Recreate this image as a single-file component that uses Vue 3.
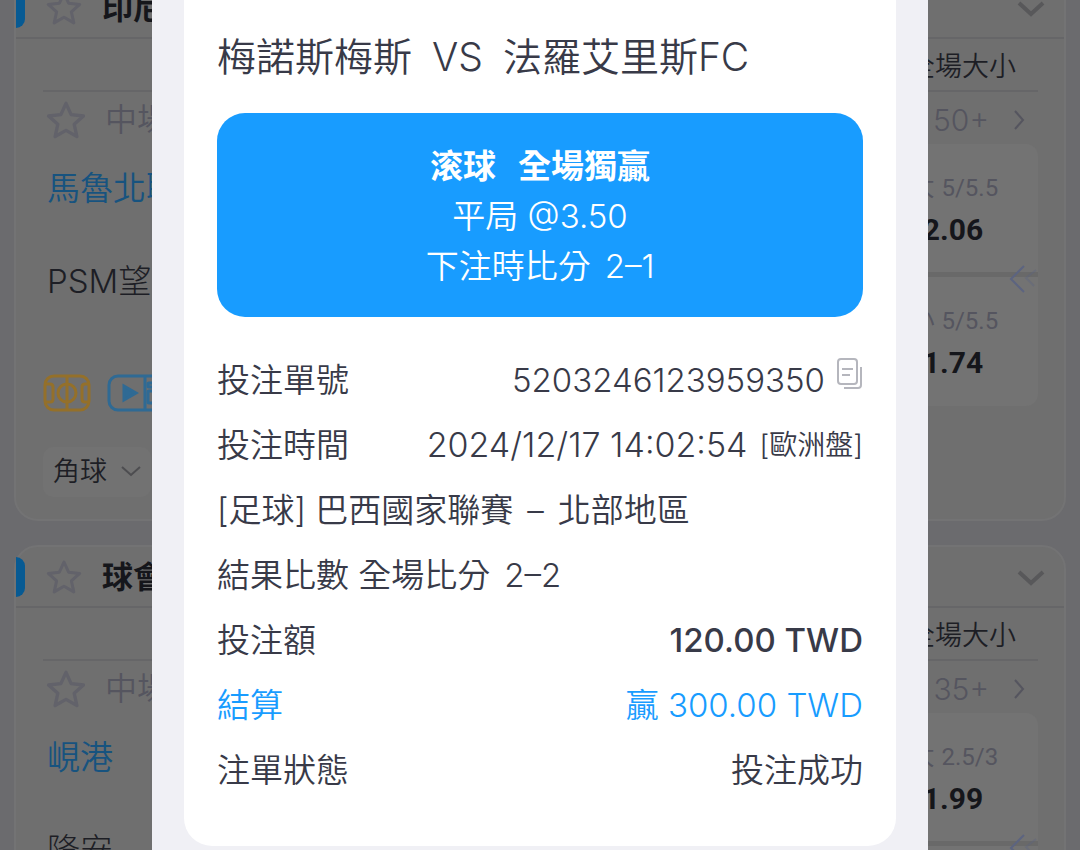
<script setup>
const matches = [
  { league: '印尼', count: '50+', home: '馬魯北聯', away: 'PSM望', odds: [['大', '5/5.5', '2.06'], ['小', '5/5.5', '1.74']] },
  { league: '球會', count: '35+', home: '峴港', away: '隆安', odds: [['大', '2.5/3', '1.99'], ['小', '2.5/3', '1.81']] },
]
</script>

<template>
  <div class="page">
    <main class="list">
      <section v-for="m in matches" :key="m.league" class="match">
        <header class="league">
          <span class="tab"></span>
          <svg class="star" width="38" height="36" viewBox="0 0 38 36"><path d="M19 3l4.6 10.2 11.1 1.2-8.3 7.5 2.4 11-9.8-5.6-9.8 5.6 2.4-11-8.3-7.5 11.1-1.200z" /></svg>
          <h2>{{ m.league }}</h2>
          <svg class="fold" width="28" height="18" viewBox="0 0 28 18"><path d="M2 4l12 11L26 4" /></svg>
        </header>
        <div class="columns"><span>全場大小</span></div>
        <div class="info">
          <svg class="star" width="44" height="40" viewBox="0 0 38 36"><path d="M19 3l4.6 10.2 11.1 1.2-8.3 7.5 2.4 11-9.8-5.6-9.8 5.6 2.4-11-8.3-7.5 11.1-1.200z" /></svg>
          <span>中場</span>
          <a class="more" href="#">{{ m.count }}
            <svg width="12" height="22" viewBox="0 0 12 22"><path d="M2 2l8 9-8 9" /></svg>
          </a>
        </div>
        <div class="body">
          <div class="teams">
            <div class="home">{{ m.home }}</div>
            <div class="away">{{ m.away }}</div>
            <div class="media">
              <svg width="48" height="38" viewBox="0 0 48 38" class="pitch">
                <rect x="2" y="2" width="44" height="34" rx="9" /><path d="M24 2v34M2 10h5q3 0 3 3v12q0 3-3 3H2M46 10h-4q-3 0-3 3v12q0 3 3 3h4" /><circle cx="24" cy="19" r="9" />
              </svg>
              <svg width="56" height="38" viewBox="0 0 56 38" class="video">
                <rect x="2" y="2" width="52" height="34" rx="9" /><path d="M38 2v34" /><rect x="41" y="9" width="9" height="4" rx="1" /><rect x="41" y="17" width="9" height="12" rx="1" /><path class="solid" d="M17 12v14l12-7z" />
              </svg>
            </div>
            <button class="corner" type="button">角球
              <svg width="20" height="12" viewBox="0 0 20 12"><path d="M1 1l9 8 9-8" /></svg>
            </button>
          </div>
          <div class="odds">
            <div v-for="o in m.odds" :key="o[0]" class="cell">
              <div class="line">{{ o[0] }} <span>{{ o[1] }}</span></div>
              <strong>{{ o[2] }}</strong>
            </div>
            <svg class="slide" width="30" height="30" viewBox="0 0 30 30"><path d="M16 2L3 15l13 13" /><path class="faint" d="M28 6L18 14l8 8" /></svg>
          </div>
        </div>
      </section>
    </main>

    <div class="dialog" role="dialog" aria-label="注單詳情">
      <article class="slip">
        <h1><span>梅諾斯梅斯</span><span>VS</span><span>法羅艾里斯FC</span></h1>
        <div class="banner">
          <strong><span>滚球</span><span>全場獨贏</span></strong>
          <span>平局 @3.50</span>
          <span class="parts"><span>下注時比分</span><span>2–1</span></span>
        </div>
        <dl>
          <div class="row">
            <dt>投注單號</dt>
            <dd>5203246123959350
              <button class="copy" type="button" aria-label="複製">
                <svg width="26" height="32" viewBox="0 0 26 32"><rect x="1" y="1" width="19" height="25" rx="3" /><path d="M5 11h11M5 17h8M24 9v18q0 3-3 3H7" /></svg>
              </button>
            </dd>
          </div>
          <div class="row"><dt>投注時間</dt><dd><time>2024/12/17 14:02:54</time><small>[歐洲盤]</small></dd></div>
          <div class="row"><dt class="parts"><span>[足球] 巴西國家聯賽</span><span>–</span><span>北部地區</span></dt></div>
          <div class="row"><dt class="parts"><span>結果比數 全場比分</span><span>2–2</span></dt></div>
          <div class="row stake"><dt>投注額</dt><dd>120.00 TWD</dd></div>
          <div class="row won"><dt>結算</dt><dd>贏 300.00 TWD</dd></div>
          <div class="row"><dt>注單狀態</dt><dd>投注成功</dd></div>
        </dl>
      </article>
    </div>
  </div>
</template>

<style>
body { background: #6b6b6e; }
</style>

<style scoped>
* { box-sizing: border-box; }
.page { position: relative; height: 100vh; overflow: hidden; background: #6b6b6e; color: #1d1e25; font-family: Inter, "Noto Sans CJK TC", sans-serif; font-weight: 350; }
svg { flex: none; fill: none; stroke: currentColor; stroke-width: 2; }
h1, h2, dl, dd { margin: 0; font-weight: inherit; }
button { padding: 0; border: 0; background: none; color: inherit; font: inherit; }
.list { display: flex; flex-direction: column; gap: 24px; margin-top: -24px; padding: 0 14px; }
.match { flex: none; height: 545px; border: 2px solid #737374; border-radius: 24px; background: #6f6f6f; }
.league { display: flex; align-items: center; height: 61px; padding-right: 19px; border-bottom: 2px solid #666668; }
.tab { width: 9px; height: 40px; border-radius: 0 9px 9px 0; background: #075a93; }
.league .star { margin: 0 19px 0 20px; }
.star { color: #62626a; stroke-width: 3; stroke-linejoin: round; }
.league h2 { font-size: 31px; line-height: 44px; font-weight: 700; color: #15161b; }
.fold { margin-left: auto; color: #58585a; stroke-width: 4; }
.columns { display: flex; justify-content: flex-end; align-items: center; height: 53px; margin: 0 26px 0 27px; padding-right: 22px; border-bottom: 2px solid #666668; font-size: 27px; }
.info { display: flex; align-items: center; gap: 17px; height: 52px; margin: 2px 26px 0 28px; font-size: 32px; line-height: 48px; color: #55555f; }
.more { display: flex; align-items: center; gap: 24px; margin-left: auto; padding-right: 13px; color: #55555f; font-size: 30px; font-weight: 300; text-decoration: none; }
.body { display: flex; justify-content: space-between; margin: -2px 26px 0 27px; }
.teams { display: flex; flex-direction: column; align-items: flex-start; padding-top: 20px; font-size: 33px; line-height: 48px; }
.home { padding-left: 4px; color: #17537f; }
.away { padding: 45px 0 0 4px; font-weight: 300; }
.media { display: flex; gap: 16px; margin-top: 69px; }
.pitch { color: #94702a; stroke-width: 3; }
.video { color: #2f6a94; stroke-width: 3; }
.solid { fill: currentColor; }
.corner { display: flex; align-items: center; gap: 14px; height: 50px; margin-top: 35px; padding: 0 10px; border-radius: 10px; background: #727272; font-size: 27px; }
.corner svg { color: #4d4d50; }
.odds { position: relative; width: 170px; }
.cell { height: 128px; padding-top: 24px; background: #737373; font-family: Roboto, "Noto Sans CJK TC", sans-serif; text-align: center; }
.cell:first-child { border-radius: 12px 12px 0 0; }
.cell + .cell { height: 134px; border-top: 5px solid #696969; border-radius: 0 0 12px 12px; }
.line { font-size: 27px; line-height: 38px; color: #55555f; }
.line span { font-size: 24px; font-weight: 400; }
.cell strong { display: block; font-size: 30px; line-height: 46px; font-weight: 700; color: #15161b; }
.slide { position: absolute; top: 120px; right: 0; color: #5c6480; }
.faint { opacity: .4; }

.dialog { position: absolute; inset: 0 152px; padding: 0 32px; background: #f0f0f5; color: #383a48; }
.slip { padding: 28px 33px 44px; border-radius: 0 0 28px 28px; background: #fff; }
h1 { display: flex; gap: 20px; font-size: 39px; line-height: 58px; white-space: nowrap; }
.banner { display: flex; flex-direction: column; align-items: center; margin: 27px 0 30px; padding: 28px 0 26px; border-radius: 28px; background: #189cff; color: #fff; font-size: 33px; line-height: 50px; }
.banner strong { display: flex; gap: 22px; font-weight: 700; }
.row { display: flex; justify-content: space-between; align-items: center; height: 65px; font-size: 33px; line-height: 48px; white-space: nowrap; }
.row dd { display: flex; align-items: center; gap: 12px; }
.row time { font-size: 34px; }
.row small { font-size: 28px; }
.parts { display: flex; gap: 14px; }
.copy { display: flex; align-self: flex-start; padding-top: 2px; color: #b5b6bd; }
.stake dd { font-weight: 500; }
.won { color: #189cff; }
</style>
